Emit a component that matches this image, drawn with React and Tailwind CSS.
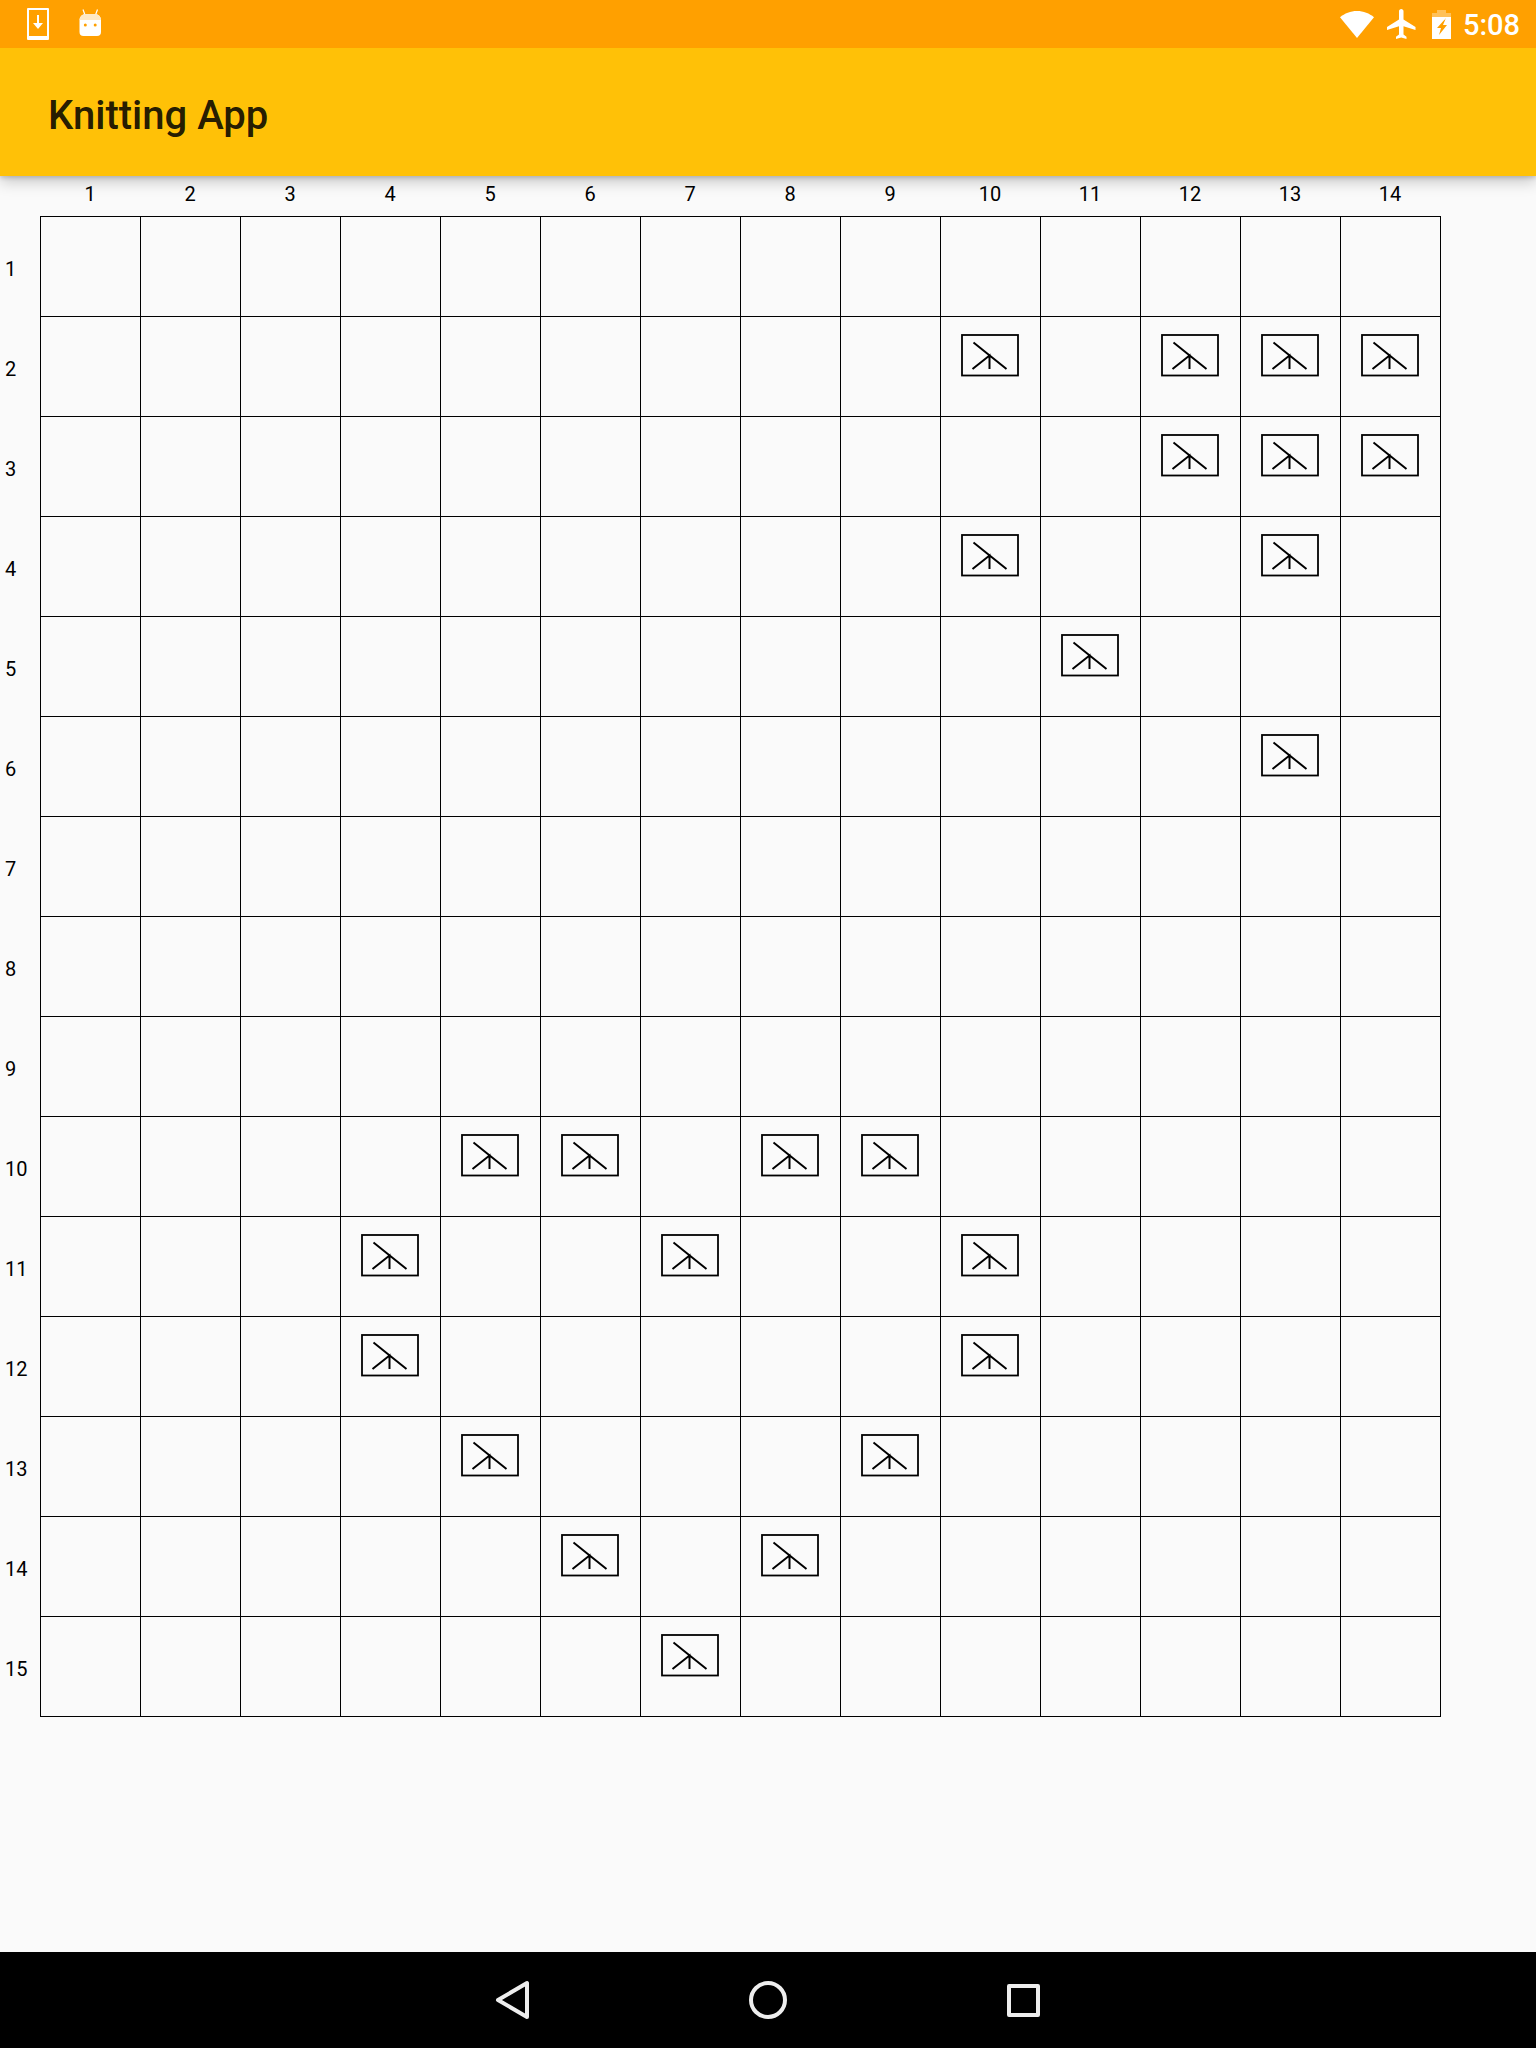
// Knitting chart screen: 14 columns by 15 rows, stitches marked per row
const COLS = Array.from({ length: 14 }, (_, i) => i + 1)
const ROWS = Array.from({ length: 15 }, (_, i) => i + 1)

const MARKS = {
  2: [10, 12, 13, 14],
  3: [12, 13, 14],
  4: [10, 13],
  5: [11],
  6: [13],
  10: [5, 6, 8, 9],
  11: [4, 7, 10],
  12: [4, 10],
  13: [5, 9],
  14: [6, 8],
  15: [7],
}

function StitchSymbol() {
  return (
    <svg width="58" height="43" viewBox="0 0 58 43" fill="none" stroke="#000" aria-hidden>
      <rect x="1" y="1" width="56" height="40.5" strokeWidth="1.8" />
      <path d="M12.5 8.5 45.5 35M11.5 35 28.5 21.5V35" strokeWidth="2" />
    </svg>
  )
}

function DownloadIcon() {
  return (
    <svg width="22" height="32" viewBox="0 0 22 32" fill="#fff" aria-hidden>
      <path
        fillRule="evenodd"
        d="M1 0h20a1 1 0 0 1 1 1v30a1 1 0 0 1-1 1H1a1 1 0 0 1-1-1V1a1 1 0 0 1 1-1zM2 2v26h18V2z"
      />
      <path d="M10 7h2v8h4l-5 6-5-6h4z" />
    </svg>
  )
}

function AndroidIcon() {
  return (
    <svg width="23" height="27" viewBox="0 0 23 27" className="-mt-1" aria-hidden>
      <path d="M4 0.5 6 6M18.5 0.5 16.5 6" stroke="#fff" strokeWidth="1.2" fill="none" />
      <path d="M0.5 11a6 6 0 0 1 6-6h9.500a6 6 0 0 1 6 6v12a4 4 0 0 1-4 4H4.500a4 4 0 0 1-4-4z" fill="#fff" />
      <path d="M0.5 11a6 6 0 0 1 6-6h9.500a6 6 0 0 1 6 6H0.500z" fill="#ffe9c4" />
      <circle cx="6.300" cy="16" r="1.500" fill="#FFA000" />
      <circle cx="16.200" cy="16" r="1.500" fill="#FFA000" />
    </svg>
  )
}

function WifiIcon() {
  return (
    <svg width="34" height="27" viewBox="0 0 34 27" fill="#fff" aria-hidden>
      <path d="M17 27 0 6.2C4.600 2.400 10.500 0 17 0s12.400 2.400 17 6.200z" />
    </svg>
  )
}

function PlaneIcon() {
  return (
    <svg width="36" height="36" viewBox="0 0 24 24" fill="#fff" aria-hidden>
      <path d="M21 16v-2l-8-5V3.5c0-.83-.67-1.5-1.5-1.5S10 2.67 10 3.5V9l-8 5v2l8-2.5V19l-2 1.5V22l3.5-1 3.5 1v-1.5L13 19v-5.5l8 2.5z" />
    </svg>
  )
}

function BatteryIcon() {
  return (
    <svg width="19" height="29" viewBox="0 0 19 29" fill="#fff" aria-hidden>
      <path d="M5 0h9v3h5v7H0V3h5z" opacity="0.35" />
      <path fillRule="evenodd" d="M0 7h19v22H0zM14 8 5 18h4l-2 7 8-10h-4z" />
    </svg>
  )
}

function BackIcon() {
  return (
    <svg width="35" height="40" viewBox="0 0 35 40" fill="none" stroke="#eee" strokeWidth="4" strokeLinejoin="round" aria-hidden>
      <path d="M32 3v34L3 20z" />
    </svg>
  )
}

function HomeIcon() {
  return (
    <svg width="38" height="38" viewBox="0 0 38 38" fill="none" stroke="#eee" strokeWidth="4" aria-hidden>
      <circle cx="19" cy="19" r="17" />
    </svg>
  )
}

function RecentsIcon() {
  return (
    <svg width="33" height="33" viewBox="0 0 33 33" fill="none" stroke="#eee" strokeWidth="4" strokeLinejoin="round" aria-hidden>
      <rect x="2" y="2" width="29" height="29" />
    </svg>
  )
}

export default function App() {
  return (
    <div className="flex h-[2048px] w-[1536px] flex-col overflow-hidden bg-[#fafafa] font-['Roboto',sans-serif] text-black">
      <div className="relative z-10 shadow-[0_2px_4px_rgba(0,0,0,0.15),0_6px_14px_rgba(0,0,0,0.2)]">
        <div className="flex h-12 items-center bg-[#FFA000] text-white">
          <div className="flex items-center gap-[30px] pl-[27px]">
            <DownloadIcon />
            <AndroidIcon />
          </div>
          <div className="ml-auto flex items-center pr-4">
            <WifiIcon />
            <div className="ml-2.5">
              <PlaneIcon />
            </div>
            <div className="ml-3">
              <BatteryIcon />
            </div>
            <span className="mt-[3px] ml-3 text-[29px] leading-none font-medium">5:08</span>
          </div>
        </div>
        <div className="flex h-32 items-center bg-[#FFC107] pt-[7px] pl-12">
          <h1 className="text-[40px] leading-none font-medium text-black/87">Knitting App</h1>
        </div>
      </div>

      <div className="flex-1">
        <div className="flex h-10 items-center pl-10">
          {COLS.map((c) => (
            <div key={c} className="w-[100px] pb-[5px] text-center text-[20px] leading-none">
              {c}
            </div>
          ))}
        </div>
        {ROWS.map((r) => (
          <div key={r} className="flex">
            <div className="flex w-10 items-center pt-[5px] pl-[5px] text-[20px] leading-none">{r}</div>
            {COLS.map((c) => (
              <div
                key={c}
                className={`flex h-[100px] w-[100px] justify-center border-t border-l border-black pt-[17px] pr-0.5 ${
                  c === 14 ? 'w-[101px] border-r' : ''
                } ${r === 15 ? 'h-[101px] border-b' : ''}`}
              >
                {MARKS[r]?.includes(c) && <StitchSymbol />}
              </div>
            ))}
          </div>
        ))}
      </div>

      <div className="flex h-24 items-center bg-black pl-[495px]">
        <BackIcon />
        <div className="ml-[219px]">
          <HomeIcon />
        </div>
        <div className="ml-[220px]">
          <RecentsIcon />
        </div>
      </div>
    </div>
  )
}
